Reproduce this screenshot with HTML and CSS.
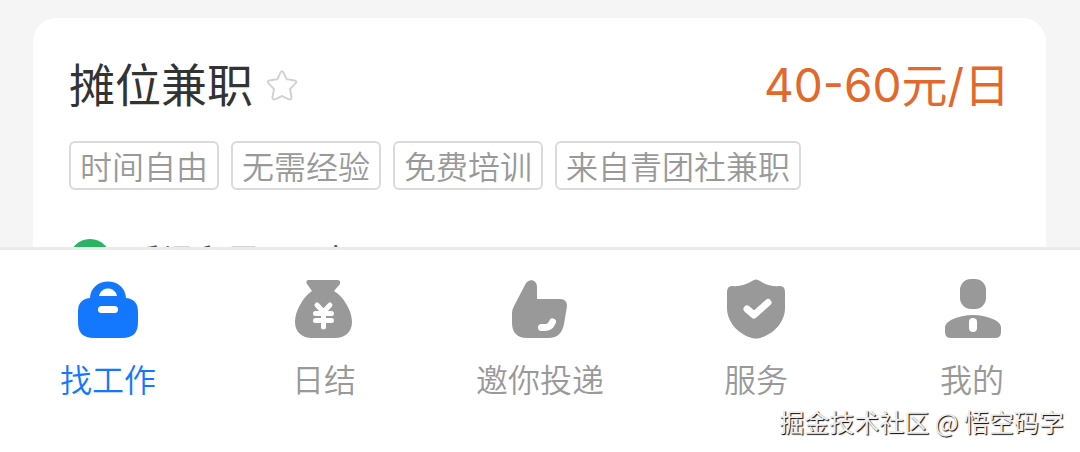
FILE: index.html
```
<!DOCTYPE html>
<html lang="zh-CN">
<head>
  <meta charset="UTF-8" />
  <meta name="viewport" content="width=device-width, initial-scale=1" />
  <title>兼职</title>
  <link rel="stylesheet" href="styles.css">
</head>
<body>
  <main class="list">
    <article class="job-card">
      <div class="job-head">
        <h2 class="job-title">摊位兼职</h2>
        <button class="fav" type="button" aria-label="收藏">
          <svg width="34" height="34" viewBox="0 0 34 34">
            <path d="M15.600 3.400Q17 1 18.400 3.400L21.600 10.200L29.500 11.400Q32.500 12.200 30.500 14.400L25 20L26.500 28Q26.600 31.500 23.500 30.200L17 27L10.500 30.200Q7.400 31.500 7.500 28L9 20L3.500 14.400Q1.500 12.200 4.500 11.400L12.400 10.200Z" />
          </svg>
        </button>
        <span class="salary">40-60元/日</span>
      </div>
      <ul class="tags">
        <li>时间自由</li>
        <li>无需经验</li>
        <li>免费培训</li>
        <li>来自青团社兼职</li>
      </ul>
      <div class="company">
        <span class="avatar"></span>
        <span>香泽和居</span>
        <span class="area">广</span>
      </div>
    </article>
  </main>

  <nav class="tabbar">
    <a class="tab active" href="#">
      <svg width="64" height="64" viewBox="0 0 64 64">
        <path d="M14 19C15 -3 49 -3 50 19C59 20 62 25 62 33V43C62 54 57 59 46 59H18C7 59 2 54 2 43V33C2 25 5 20 14 19Z" />
        <path class="cut" d="M23 17C25 7 39 7 41 17Z" />
        <rect class="cut" x="22" y="27" width="20" height="7" rx="3.500" />
      </svg>
      <span>找工作</span>
    </a>
    <a class="tab" href="#">
      <svg width="64" height="64" viewBox="0 0 64 64">
        <path d="M17 1H45Q49 1 48 5L42 12C52 18 60 32 60 43C60 53 53 59 43 59H20C10 59 3 53 3 43C3 32 11 18 20 12L15 5Q13 1 17 1Z" />
        <path class="line yen" d="M25 26L31.500 33L38 26M23.500 34.500H39.500M23.500 41.500H39.500M31.500 34V48" />
      </svg>
      <span>日结</span>
    </a>
    <a class="tab" href="#">
      <svg width="64" height="64" viewBox="0 0 64 64">
        <path d="M17 6C20 -1 29 0 29 8V20H52Q59 20 59 27L56 45C54 55 49 59 40 59H19C9 59 4 53 4 44V34Q4 31 6 27Z" />
        <path class="line thick" d="M33.500 48.500H36Q42 49 44.500 43" />
      </svg>
      <span>邀你投递</span>
    </a>
    <a class="tab" href="#">
      <svg width="64" height="64" viewBox="0 0 64 64">
        <path d="M28 2Q32 -1 36 2Q45 8 56 7Q61 7 61 13V29C61 43 50 55 36 59Q32 60 28 59C14 55 3 43 3 29V13Q3 7 8 7Q19 8 28 2Z" />
        <path class="line thick" d="M23 30L30 36L44 23.500" />
      </svg>
      <span>服务</span>
    </a>
    <a class="tab" href="#">
      <svg width="64" height="64" viewBox="0 0 64 64">
        <rect x="20" y="0" width="26" height="30" rx="11" />
        <path d="M11 41Q33 31 55 41Q61 44 61 49V53Q61 59 55 59H11Q5 59 5 53V49Q5 44 11 41Z" />
        <rect class="cut" x="29" y="39" width="8" height="14" rx="4" />
      </svg>
      <span>我的</span>
    </a>
  </nav>

  <div class="watermark">掘金技术社区 @ 悟空码字</div>
</body>
</html>
```
FILE: styles.css
```
* {
  box-sizing: border-box;
}

body {
  margin: 0;
  height: 100vh;
  display: flex;
  flex-direction: column;
  overflow: hidden;
  background: #f5f5f5;
  font-family: "Noto Sans CJK SC", sans-serif;
}

.list {
  flex: 1;
  min-height: 0;
  overflow: hidden;
  padding: 18px 34px 0 33px;
}

.job-card {
  padding: 32px 36px;
  border-radius: 24px;
  background: #fff;
}

.job-head {
  display: flex;
  align-items: flex-start;
  height: 68px;
}

.job-title {
  margin: 0;
  font-size: 46px;
  font-weight: 400;
  line-height: 64px;
  color: #333;
}

.fav {
  display: flex;
  margin: 19px 0 0 12px;
  padding: 0;
  border: 0;
  background: none;
}

.fav svg {
  fill: none;
  stroke: #d2d2d2;
  stroke-width: 2;
}

.salary {
  margin-left: auto;
  font-family: Inter, "Noto Sans CJK SC", sans-serif;
  font-size: 46px;
  line-height: 70px;
  color: #e2682c;
}

.tags {
  display: flex;
  gap: 12px;
  margin: 23px 0 0;
  padding: 0;
  list-style: none;
}

.tags li {
  padding: 0 9px 1px;
  border: 2px solid #dadada;
  border-radius: 6px;
  font-size: 32px;
  font-weight: 350;
  line-height: 44px;
  color: #999;
}

.company {
  display: flex;
  align-items: flex-start;
  gap: 20px;
  margin-top: 49px;
  font-size: 32px;
  line-height: 38px;
  color: #555;
}

.avatar {
  width: 42px;
  height: 42px;
  border-radius: 50%;
  background: #2bb264;
}

.area {
  margin-left: 40px;
}

.tabbar {
  display: flex;
  height: 205px;
  padding-top: 29px;
  border-top: 3px solid #ebebeb;
  background: #fff;
}

.tab {
  flex: 1;
  display: flex;
  flex-direction: column;
  align-items: center;
  gap: 12px;
  font-size: 32px;
  font-weight: 350;
  line-height: 46px;
  color: #999;
  text-decoration: none;
}

.tab svg {
  fill: currentColor;
}

.tab .cut {
  fill: #fff;
}

.tab .line {
  fill: none;
  stroke: #fff;
  stroke-width: 4;
  stroke-linecap: round;
  stroke-linejoin: round;
}

.tab .yen {
  stroke-width: 5;
}

.tab .thick {
  stroke-width: 7;
}

.tab.active {
  color: #1478ff;
}

.watermark {
  position: absolute;
  right: 16px;
  bottom: 12px;
  font-size: 25px;
  line-height: 38px;
  color: #eee;
  text-shadow: 1px 1px 1px #000;
}
```
